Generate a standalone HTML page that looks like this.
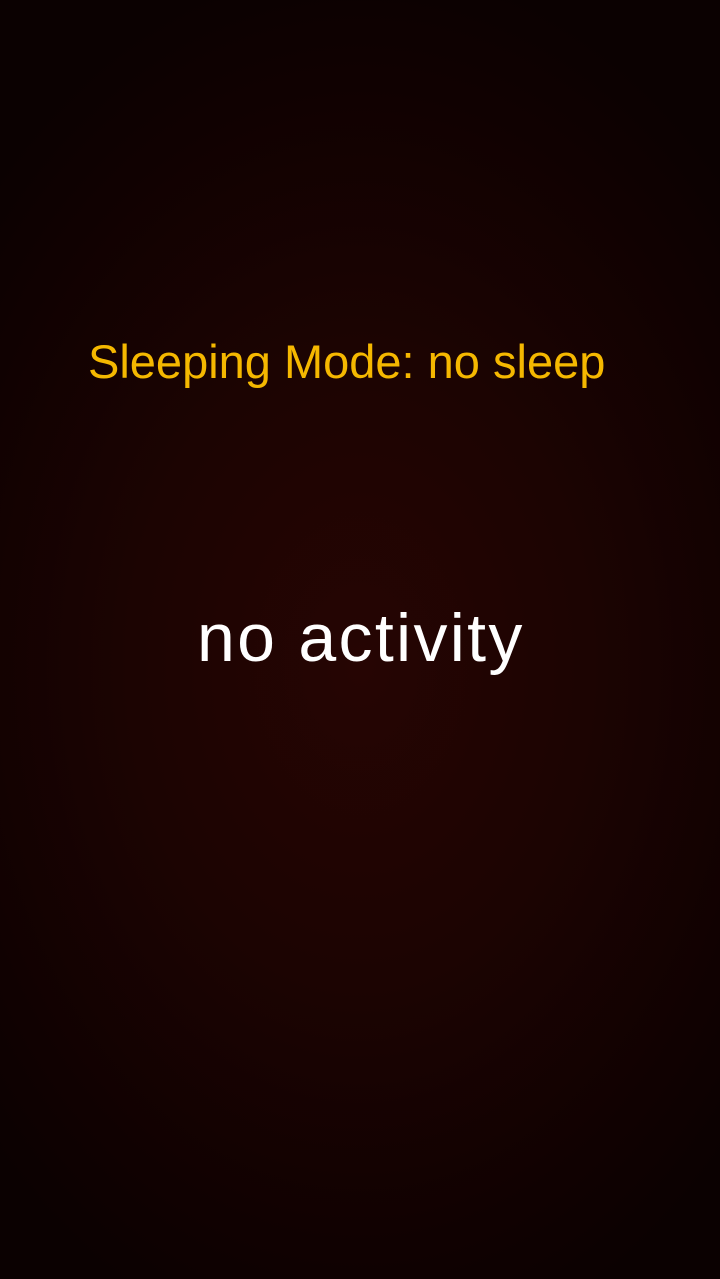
<!DOCTYPE html>
<html><head><meta charset="utf-8"><style>
html,body{margin:0;padding:0}
body{width:720px;height:1279px;overflow:hidden;position:relative;
background:radial-gradient(ellipse 70% 55% at 50% 52%,#260503 0%,#1c0402 45%,#110101 80%,#0b0101 100%);
font-family:"Liberation Sans",sans-serif}
.a{position:absolute;left:88px;top:334px;font-size:47px;color:#f5b800;white-space:nowrap;letter-spacing:0px}
.b{position:absolute;left:197px;top:599px;font-size:68px;color:#fff;white-space:nowrap;letter-spacing:2.3px}
</style></head><body>
<div class="a">Sleeping Mode: no sleep</div>
<div class="b">no activity</div>
</body></html>
